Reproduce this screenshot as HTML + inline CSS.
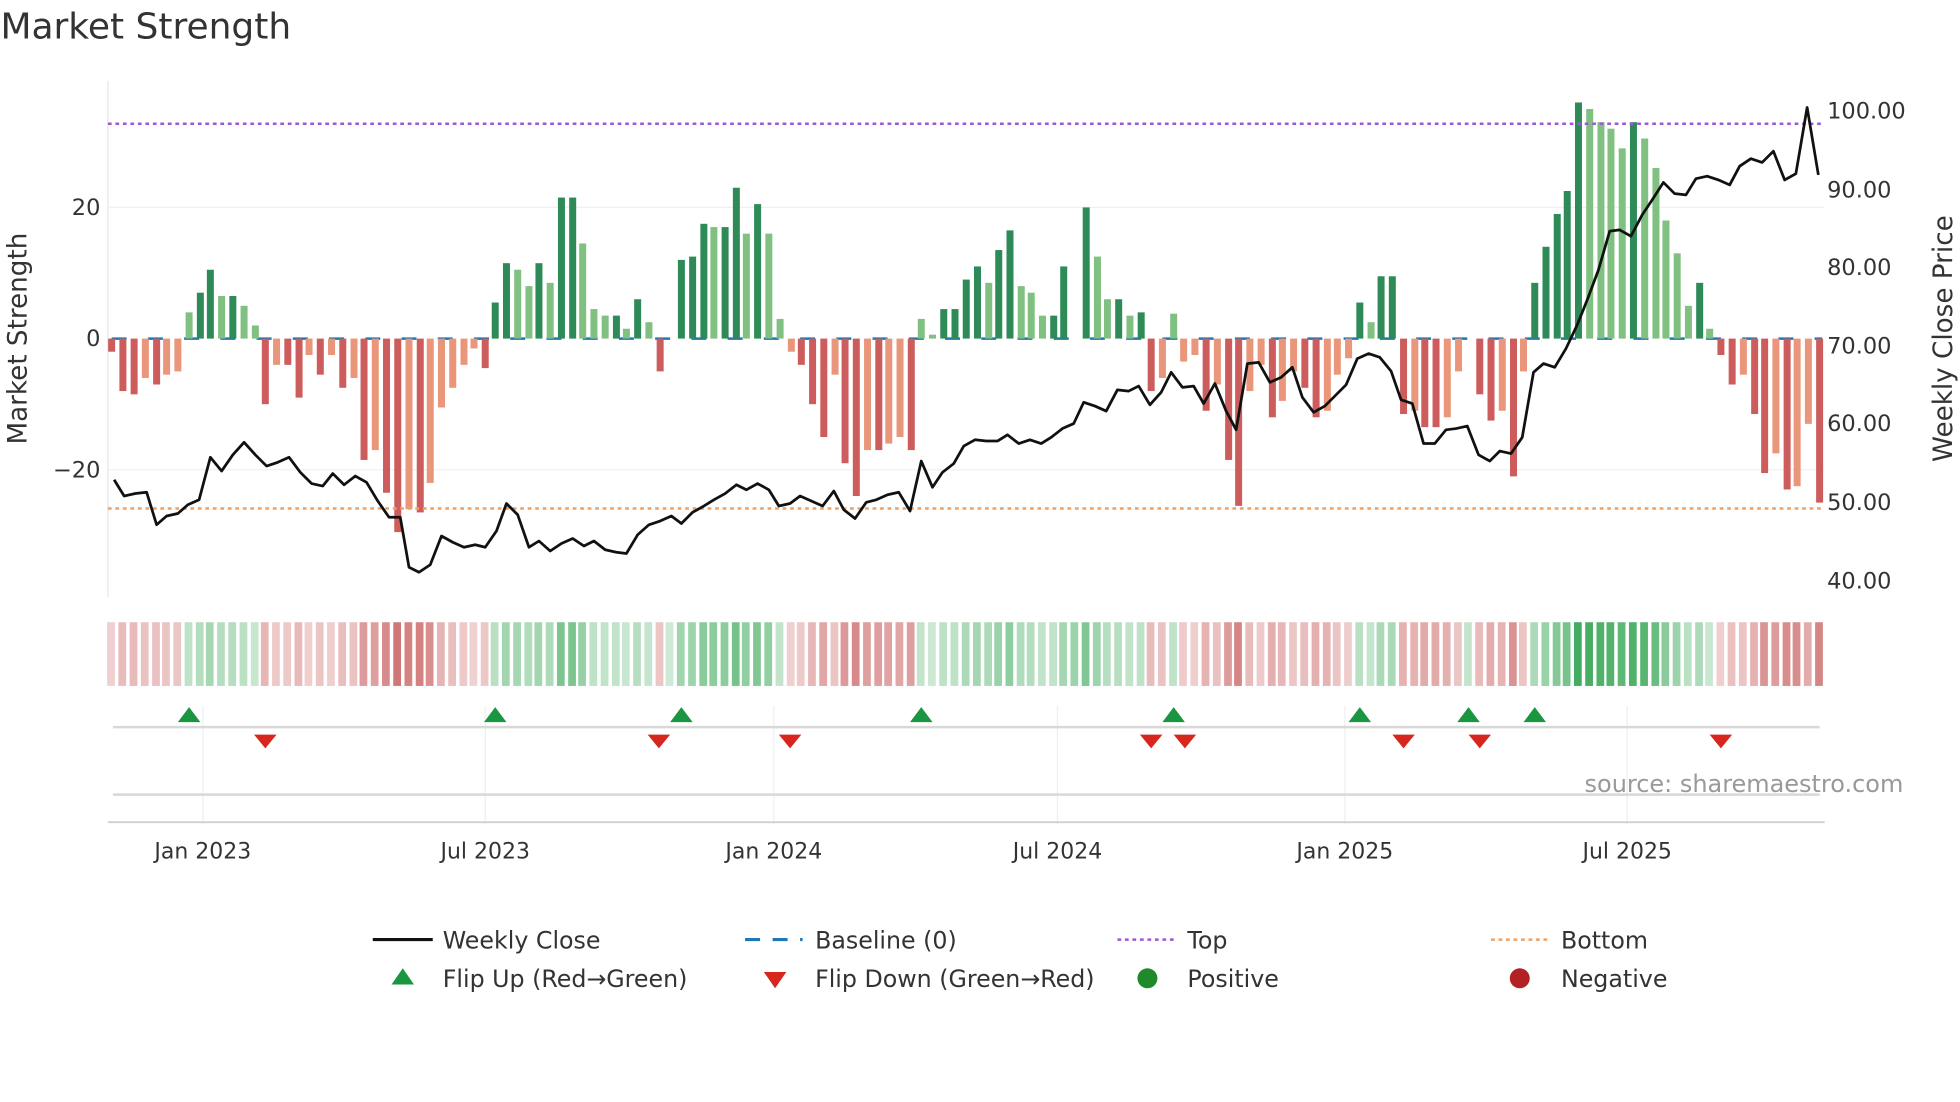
<!DOCTYPE html>
<html><head><meta charset="utf-8"><style>html,body{margin:0;padding:0;background:#fff}svg{display:block}text{font-family:"DejaVu Sans","Liberation Sans",sans-serif}</style></head>
<body>
<svg id="s" width="1960" height="1102" viewBox="0 0 1568 882" xmlns="http://www.w3.org/2000/svg">
<rect width="1568" height="882" fill="#fff"/>
<text x="0" y="31" font-size="28.8" fill="#333">Market Strength</text>
<line x1="86" y1="65" x2="86" y2="478" stroke="#e6e6e6"/>
<line x1="86" y1="166" x2="1460" y2="166" stroke="#f0f0f0"/>
<line x1="86" y1="376" x2="1460" y2="376" stroke="#f0f0f0"/>
<g stroke="#eef0f0">
<line x1="162" y1="565" x2="162" y2="660"/><line x1="388" y1="565" x2="388" y2="660"/><line x1="619" y1="565" x2="619" y2="660"/><line x1="846" y1="565" x2="846" y2="660"/><line x1="1076" y1="565" x2="1076" y2="660"/><line x1="1302" y1="565" x2="1302" y2="660"/>
</g>
<line x1="89" y1="271" x2="1458" y2="271" stroke="#1f77b4" stroke-width="2" stroke-dasharray="12,17"/>
<g id="bars"></g>
<g id="heat"></g>
<line x1="86" y1="99" x2="1458" y2="99" stroke="#9b59d6" stroke-width="2" stroke-dasharray="3,3"/>
<line x1="86" y1="407" x2="1458" y2="407" stroke="#f0a060" stroke-width="2" stroke-dasharray="3,3"/>
<polyline id="price" fill="none" stroke="#111" stroke-width="2.2" stroke-linejoin="round"/>
<g font-size="18" fill="#333">
<text x="80" y="172" text-anchor="end">20</text><text x="80" y="277" text-anchor="end">0</text><text x="80" y="382" text-anchor="end">−20</text>
<text x="1462" y="95">100.00</text><text x="1462" y="158">90.00</text><text x="1462" y="220">80.00</text><text x="1462" y="283">70.00</text><text x="1462" y="345">60.00</text><text x="1462" y="408">50.00</text><text x="1462" y="471">40.00</text>
</g>
<text transform="translate(21,271) rotate(-90)" font-size="21" fill="#333" text-anchor="middle">Market Strength</text>
<text transform="translate(1562,271) rotate(-90)" font-size="21" fill="#333" text-anchor="middle">Weekly Close Price</text>
<line x1="90" y1="582" x2="1456" y2="582" stroke="#d8d8d8" stroke-width="2"/>
<g id="mk"></g>
<line x1="90" y1="636" x2="1456" y2="636" stroke="#d8d8d8" stroke-width="2"/>
<line x1="86" y1="658" x2="1460" y2="658" stroke="#d0d0d0" stroke-width="1.5"/>
<text x="1523" y="634" font-size="19.2" fill="#999" text-anchor="end">source: sharemaestro.com</text>
<g font-size="17.6" fill="#333" text-anchor="middle">
<text x="162" y="687">Jan 2023</text><text x="388" y="687">Jul 2023</text><text x="619" y="687">Jan 2024</text><text x="846" y="687">Jul 2024</text><text x="1076" y="687">Jan 2025</text><text x="1302" y="687">Jul 2025</text>
</g>
<g font-size="19" fill="#333">
<line x1="298" y1="752" x2="346" y2="752" stroke="#111" stroke-width="2.5"/><text x="354" y="759">Weekly Close</text>
<line x1="596" y1="752" x2="642" y2="752" stroke="#1f77b4" stroke-width="2.5" stroke-dasharray="12,10"/><text x="652" y="759">Baseline (0)</text>
<line x1="894" y1="752" x2="940" y2="752" stroke="#9b59d6" stroke-width="2" stroke-dasharray="3,3"/><text x="950" y="759">Top</text>
<line x1="1193" y1="752" x2="1239" y2="752" stroke="#f0a060" stroke-width="2" stroke-dasharray="3,3"/><text x="1249" y="759">Bottom</text>
<polygon points="313,788 331,788 322,775" fill="#1a9641"/><text x="354" y="790">Flip Up (Red→Green)</text>
<polygon points="611,778 629,778 620,791" fill="#d7261e"/><text x="652" y="790">Flip Down (Green→Red)</text>
<circle cx="918" cy="783" r="8" fill="#1f8a2a"/><text x="950" y="790">Positive</text>
<circle cx="1216" cy="783" r="8" fill="#b22222"/><text x="1249" y="790">Negative</text>
</g>
</svg>
<script>
var B=[[89,-2],[98,-8],[107,-8.5],[116,-6],[125,-7],[133,-5.5],[142,-5],[151,4],[160,7],[168,10.5],[177,6.5],[186,6.5],[195,5],[204,2],[212,-10],[221,-4],[230,-4],[239,-9],[247,-2.5],[256,-5.5],[265,-2.5],[274,-7.5],[283,-6],[291,-18.5],[300,-17],[309,-23.5],[318,-29.5],[327,-26],[336,-26.5],[344,-22],[353,-10.5],[362,-7.5],[371,-4],[379,-1.5],[388,-4.5],[396,5.5],[405,11.5],[414,10.5],[423,8],[431,11.5],[440,8.5],[449,21.5],[458,21.5],[466,14.5],[475,4.5],[484,3.5],[493,3.5],[501,1.5],[510,6],[519,2.5],[528,-5],[545,12],[554,12.5],[563,17.5],[571,17],[580,17],[589,23],[597,16],[606,20.5],[615,16],[624,3],[633,-2],[641,-4],[650,-10],[659,-15],[668,-5.5],[676,-19],[685,-24],[694,-17],[703,-17],[711,-16],[720,-15],[729,-17],[737,3],[746,0.6],[755,4.5],[764,4.5],[773,9],[782,11],[791,8.5],[799,13.5],[808,16.5],[817,8],[825,7],[834,3.5],[843,3.5],[851,11],[869,20],[878,12.5],[886,6],[895,6],[904,3.5],[913,4],[921,-8],[930,-6],[939,3.8],[947,-3.5],[956,-2.5],[965,-11],[974,-7],[983,-18.5],[991,-25.5],[1000,-8],[1009,-4],[1018,-12],[1026,-9.5],[1035,-5],[1044,-7.5],[1053,-12],[1062,-11],[1070,-5.5],[1079,-3],[1088,5.5],[1097,2.5],[1105,9.5],[1114,9.5],[1123,-11.5],[1132,-11],[1140,-13.5],[1149,-13.5],[1158,-12],[1167,-5],[1184,-8.5],[1193,-12.5],[1202,-11],[1211,-21],[1219,-5],[1228,8.5],[1237,14],[1246,19],[1254,22.5],[1263,36],[1272,35],[1281,33],[1289,32],[1298,29],[1307,33],[1316,30.5],[1325,26],[1333,18],[1342,13],[1351,5],[1360,8.5],[1368,1.5],[1377,-2.5],[1386,-7],[1395,-5.5],[1404,-11.5],[1412,-20.5],[1421,-17.5],[1430,-23],[1438,-22.5],[1447,-13],[1456,-25]];
var ns="http://www.w3.org/2000/svg",g=document.getElementById("bars"),h=document.getElementById("heat");
function R(p,x,y,w,hh,f,o){var r=document.createElementNS(ns,"rect");r.setAttribute("x",x);r.setAttribute("y",y);r.setAttribute("width",w);r.setAttribute("height",hh);r.setAttribute("fill",f);if(o!=null)r.setAttribute("fill-opacity",o);p.appendChild(r);}
var prev=0;
for(var i=0;i<B.length;i++){var x=B[i][0],v=B[i][1],inc=Math.abs(v)>=Math.abs(prev);var c=v>0?(inc?"#2e8b57":"#80c080"):(inc?"#cd5c5c":"#e9967a");var y=271-Math.max(v,0)*5.25,hh=Math.abs(v)*5.25;R(g,x-2.8,y,5.6,hh,c);
var o=0.25+Math.min(Math.abs(v),36)/36*0.7;R(h,x-3.6,498,6.2,51,v>0?"#3aa857":"#c85a5a",o);prev=v;}
R(h,536-3.6,498,6.2,51,"#3aa857",0.25);R(h,860-3.6,498,6.2,51,"#3aa857",0.5);R(h,1175-3.6,498,6.2,51,"#3aa857",0.3);
var P="91,384 99,397 108,395 117,394 125,420 133,413 142,411 150,404 159,400 168,366 177,377 186,364 195,354 204,364 213,373 222,370 231,366 240,378 249,387 258,389 266,379 275,388 284,381 293,386 302,401 311,414 320,414 327,454 335,458 344,452 353,429 362,434 371,438 380,436 388,438 397,425 405,403 414,412 423,438 431,433 440,441 449,435 458,431 467,437 475,433 484,440 493,442 501,443 510,428 519,420 528,417 537,413 545,419 554,410 563,405 571,400 580,395 589,388 597,392 606,387 615,392 623,405 632,403 640,397 649,401 658,405 667,393 675,408 684,415 693,402 701,400 710,396 719,394 728,409 737,369 746,390 754,378 763,371 771,357 780,352 789,353 798,353 806,348 815,355 824,352 833,355 841,350 850,343 859,339 867,322 876,325 885,329 894,312 903,313 911,309 920,324 929,314 937,298 946,310 955,309 963,323 972,307 981,329 989,344 998,291 1007,290 1016,306 1025,302 1034,294 1042,318 1051,330 1060,325 1069,316 1077,308 1086,287 1095,283 1104,286 1113,297 1121,320 1130,323 1139,355 1148,355 1157,344 1165,343 1174,341 1183,364 1192,369 1200,361 1209,363 1218,350 1227,298 1235,291 1244,294 1253,279 1262,260 1270,240 1279,216 1288,185 1296,184 1305,189 1314,172 1322,160 1331,146 1340,155 1349,156 1357,143 1366,141 1375,144 1384,148 1392,133 1401,127 1410,130 1419,121 1428,144 1437,139 1446,86 1455,140";
document.getElementById("price").setAttribute("points",P);
var mk=document.getElementById("mk"),s="";
[151,396,545,737,939,1088,1175,1228].forEach(function(x){s+='<polygon points="'+(x-9)+',578 '+(x+9)+',578 '+x+',566" fill="#1a9641"/>';});
[212,527,632,921,948,1123,1184,1377].forEach(function(x){s+='<polygon points="'+(x-9)+',588 '+(x+9)+',588 '+x+',599" fill="#d7261e"/>';});
mk.innerHTML=s;
</script>
</body></html>
